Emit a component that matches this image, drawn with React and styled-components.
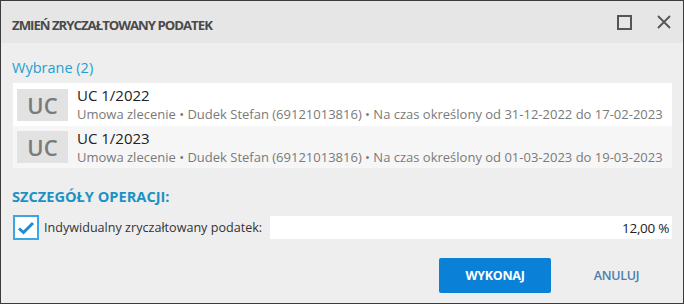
import React from "react";
import styled, { createGlobalStyle } from "styled-components";

const GlobalStyle = createGlobalStyle`
  html, body {
    margin: 0;
    padding: 0;
    background: #ffffff;
  }
  * {
    box-sizing: border-box;
  }
`;

const Window = styled.div`
  width: 684px;
  height: 304px;
  border: 1px solid #3c3c3c;
  background: #eeeeee;
  font-family: "Open Sans", "Noto Sans", sans-serif;
  display: flex;
  flex-direction: column;
`;

const TitleBar = styled.div`
  height: 42px;
  background: #e6e6e6;
  display: flex;
  align-items: center;
  padding: 0 12px 0 11px;
`;

const Title = styled.h1`
  flex: 1;
  margin: 0;
  padding-top: 5px;
  font-size: 13.2px;
  font-weight: 700;
  color: #4a4a4a;
  letter-spacing: -1px;
`;

const TitleButton = styled.button`
  border: none;
  background: none;
  padding: 0;
  margin-left: ${(p) => p.$gap}px;
  display: flex;
  align-items: center;
  justify-content: center;
  cursor: pointer;
`;

const Body = styled.div`
  flex: 1;
  display: flex;
  flex-direction: column;
  padding: 15px 11px 0 11px;
`;

const SectionLink = styled.div`
  font-size: 14.5px;
  color: #1ea0d2;
  line-height: 20px;
`;

const List = styled.div`
  margin: 5px 0 0 1px;
  display: flex;
  flex-direction: column;
  background: #f7f7f7;
`;

const Row = styled.div`
  height: ${(p) => (p.$first ? 43 : 42)}px;
  display: flex;
  align-items: center;
  padding-left: 4px;
  background: ${(p) => (p.$first ? "#ffffff" : "#f6f6f6")};
`;

const Badge = styled.div`
  width: 51px;
  height: 32px;
  background: #e2e2e2;
  color: #7a7a7a;
  font-size: 22px;
  font-weight: 600;
  display: flex;
  align-items: center;
  justify-content: center;
`;

const RowText = styled.div`
  margin-left: 9px;
  display: flex;
  flex-direction: column;
`;

const RowTitle = styled.div`
  font-size: 15px;
  color: #222222;
  line-height: 19px;
`;

const RowSub = styled.div`
  font-size: 13px;
  color: #7a7a7a;
  line-height: 18px;
`;

const Heading = styled.h2`
  margin: 18px 0 0 0;
  font-size: 14.6px;
  font-weight: 700;
  color: #1c92c4;
  line-height: 20px;
`;

const FieldRow = styled.div`
  margin-top: 9px;
  display: flex;
  align-items: center;
`;

const CheckBox = styled.div`
  width: 26px;
  height: 25px;
  border: 2px solid #3ba6e6;
  background: #ffffff;
  display: flex;
  align-items: center;
  justify-content: center;
  margin-left: 1px;
`;

const Label = styled.span`
  margin-left: 5px;
  font-size: 12.6px;
  color: #333333;
`;

const Input = styled.div`
  margin-left: 8px;
  flex: 1;
  height: 23px;
  background: #ffffff;
  display: flex;
  align-items: center;
  justify-content: flex-end;
  padding-right: 3px;
  font-size: 13.5px;
  color: #222222;
  letter-spacing: -0.3px;
`;

const Footer = styled.div`
  margin-top: 18px;
  display: flex;
  justify-content: flex-end;
  align-items: center;
`;

const PrimaryButton = styled.button`
  width: 112px;
  height: 35px;
  border: none;
  border-radius: 2px;
  background: #0a80d6;
  color: #ffffff;
  font-family: inherit;
  font-size: 12.5px;
  font-weight: 700;
  letter-spacing: -0.3px;
  cursor: pointer;
`;

const TextButton = styled.button`
  width: 111px;
  height: 35px;
  margin-left: 10px;
  border: none;
  background: none;
  color: #4a7fae;
  font-family: inherit;
  font-size: 12.5px;
  font-weight: 600;
  letter-spacing: -0.3px;
  cursor: pointer;
`;

const items = [
  {
    name: "UC 1/2022",
    desc: "Umowa zlecenie • Dudek Stefan (69121013816) • Na czas określony od 31-12-2022 do 17-02-2023",
  },
  {
    name: "UC 1/2023",
    desc: "Umowa zlecenie • Dudek Stefan (69121013816) • Na czas określony od 01-03-2023 do 19-03-2023",
  },
];

const App = () => {
  return (
    <>
      <GlobalStyle />
      <Window>
        <TitleBar>
          <Title>ZMIEŃ ZRYCZAŁTOWANY PODATEK</Title>
          <TitleButton aria-label="Maksymalizuj" $gap={0}>
            <svg width="15" height="15" viewBox="0 0 15 15">
              <rect x="1" y="1" width="13" height="13" fill="none" stroke="#555" strokeWidth="2" />
            </svg>
          </TitleButton>
          <TitleButton aria-label="Zamknij" $gap={25}>
            <svg width="14" height="14" viewBox="0 0 14 14">
              <path d="M1 1 L13 13 M13 1 L1 13" stroke="#555" strokeWidth="1.8" />
            </svg>
          </TitleButton>
        </TitleBar>
        <Body>
          <SectionLink>Wybrane (2)</SectionLink>
          <List>
            {items.map((item, i) => (
              <Row key={item.name} $first={i === 0}>
                <Badge>UC</Badge>
                <RowText>
                  <RowTitle>{item.name}</RowTitle>
                  <RowSub>{item.desc}</RowSub>
                </RowText>
              </Row>
            ))}
          </List>
          <Heading>SZCZEGÓŁY OPERACJI:</Heading>
          <FieldRow>
            <CheckBox>
              <svg width="18" height="14" viewBox="0 0 18 14">
                <path d="M2 7.5 L6.5 11.5 L16 2" fill="none" stroke="#1a8ed8" strokeWidth="3" />
              </svg>
            </CheckBox>
            <Label>Indywidualny zryczałtowany podatek:</Label>
            <Input>12,00 %</Input>
          </FieldRow>
          <Footer>
            <PrimaryButton>WYKONAJ</PrimaryButton>
            <TextButton>ANULUJ</TextButton>
          </Footer>
        </Body>
      </Window>
    </>
  );
};

export default App;
